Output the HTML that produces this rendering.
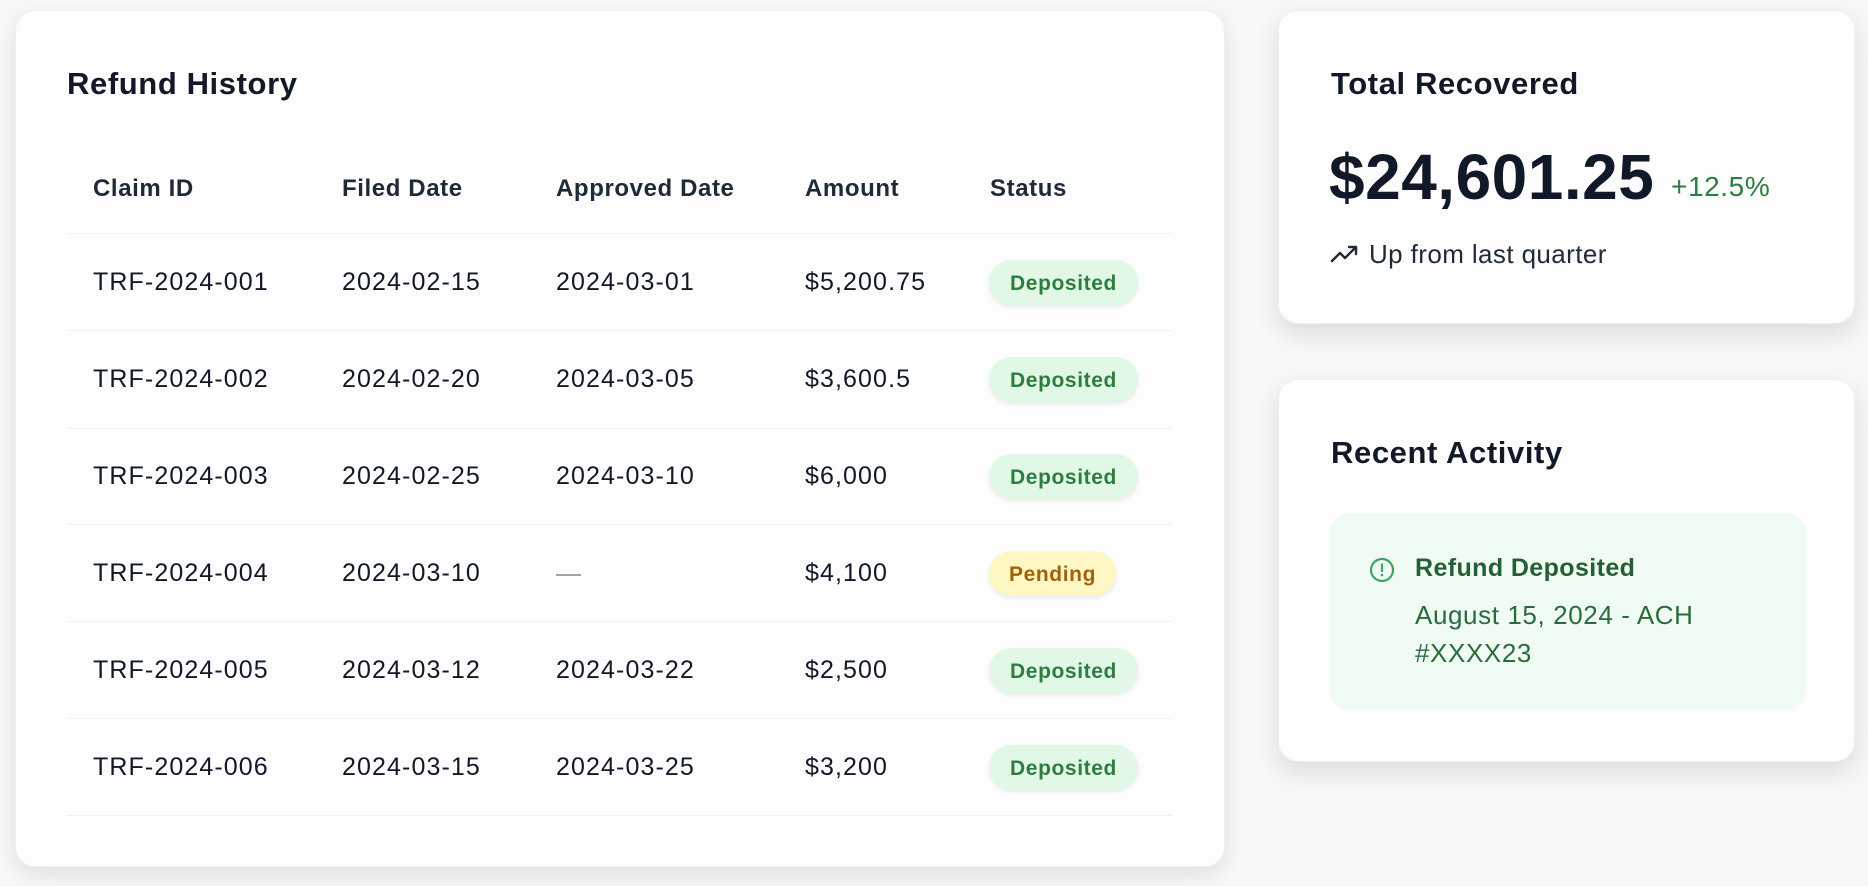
<!DOCTYPE html>
<html><head><meta charset="utf-8"><style>
*{box-sizing:border-box;margin:0;padding:0}
body{width:1868px;height:886px;background:#f8f8f8;font-family:"Liberation Sans",sans-serif;color:#111827;position:relative;overflow:hidden}
.card{position:absolute;background:#fdfdfd;border-radius:20px;box-shadow:0 8px 22px rgba(0,0,0,0.10);border:1px solid #f0f0f0}
.t{position:absolute;white-space:nowrap}
.h2{font-size:31px;font-weight:bold;letter-spacing:0.6px}
.hd{font-size:24px;font-weight:bold;color:#1f2937;letter-spacing:0.6px}
.cell{font-size:25px;letter-spacing:1.1px;color:#111827}
.line{position:absolute;left:67px;width:1105px;height:1px;background:#eef2f7}
.badge{position:absolute;left:989px;height:45px;width:149px;border-radius:23px;background:#e1f8e6;color:#2e7d40;font-weight:bold;font-size:21px;text-align:center;line-height:47px;box-shadow:0 2px 4px rgba(0,0,0,0.08);letter-spacing:0.6px}
.pend{background:#fef7c3;color:#a16207;width:127px}
</style></head><body>
<div class="card" style="left:15px;top:10px;width:1210px;height:857px"></div>
<div class="t h2" style="left:67px;top:66px">Refund History</div>
<div class="t hd" style="left:93px;top:175px">Claim ID</div>
<div class="t hd" style="left:342px;top:175px">Filed Date</div>
<div class="t hd" style="left:556px;top:175px">Approved Date</div>
<div class="t hd" style="left:805px;top:175px">Amount</div>
<div class="t hd" style="left:990px;top:175px">Status</div>
<div class="line" style="top:233px"></div>
<div class="line" style="top:330px"></div>
<div class="line" style="top:428px"></div>
<div class="line" style="top:524px"></div>
<div class="line" style="top:621px"></div>
<div class="line" style="top:718px"></div>
<div class="line" style="top:815px"></div>

<div class="t cell" style="left:93px;top:268px">TRF-2024-001</div><div class="t cell" style="left:342px;top:268px">2024-02-15</div><div class="t cell" style="left:556px;top:268px">2024-03-01</div><div class="t cell" style="left:805px;top:268px">$5,200.75</div><div class="badge" style="top:260px">Deposited</div>
<div class="t cell" style="left:93px;top:365px">TRF-2024-002</div><div class="t cell" style="left:342px;top:365px">2024-02-20</div><div class="t cell" style="left:556px;top:365px">2024-03-05</div><div class="t cell" style="left:805px;top:365px">$3,600.5</div><div class="badge" style="top:357px">Deposited</div>
<div class="t cell" style="left:93px;top:462px">TRF-2024-003</div><div class="t cell" style="left:342px;top:462px">2024-02-25</div><div class="t cell" style="left:556px;top:462px">2024-03-10</div><div class="t cell" style="left:805px;top:462px">$6,000</div><div class="badge" style="top:454px">Deposited</div>
<div class="t cell" style="left:93px;top:559px">TRF-2024-004</div><div class="t cell" style="left:342px;top:559px">2024-03-10</div><div style="position:absolute;left:556px;top:574px;width:25px;height:2px;background:#9ca3af"></div><div class="t cell" style="left:805px;top:559px">$4,100</div><div class="badge pend" style="top:551px">Pending</div>
<div class="t cell" style="left:93px;top:656px">TRF-2024-005</div><div class="t cell" style="left:342px;top:656px">2024-03-12</div><div class="t cell" style="left:556px;top:656px">2024-03-22</div><div class="t cell" style="left:805px;top:656px">$2,500</div><div class="badge" style="top:648px">Deposited</div>
<div class="t cell" style="left:93px;top:753px">TRF-2024-006</div><div class="t cell" style="left:342px;top:753px">2024-03-15</div><div class="t cell" style="left:556px;top:753px">2024-03-25</div><div class="t cell" style="left:805px;top:753px">$3,200</div><div class="badge" style="top:745px">Deposited</div>

<div class="card" style="left:1278px;top:10px;width:577px;height:314px;box-shadow:0 10px 26px rgba(0,0,0,0.12)"></div>
<div class="t h2" style="left:1331px;top:66px">Total Recovered</div>
<div class="t" style="left:1329px;top:140px;font-size:64px;font-weight:bold;letter-spacing:0.5px">$24,601.25</div>
<div class="t" style="left:1671px;top:171px;font-size:28px;color:#2e7d40;letter-spacing:0.6px">+12.5%</div>
<svg style="position:absolute;left:1330px;top:243px" width="30" height="22" viewBox="0 0 30 22"><path d="M2 18 L10 10 L15 15 L26 4 M19 4 H26 V11" fill="none" stroke="#1f2937" stroke-width="2.4" stroke-linecap="round" stroke-linejoin="round"/></svg>
<div class="t" style="left:1369px;top:239px;font-size:26px;color:#1f2937;letter-spacing:0.4px">Up from last quarter</div>

<div class="card" style="left:1278px;top:379px;width:577px;height:383px;box-shadow:0 10px 26px rgba(0,0,0,0.12)"></div>
<div class="t h2" style="left:1331px;top:435px">Recent Activity</div>
<div style="position:absolute;left:1329px;top:513px;width:477px;height:197px;background:#f0fcf3;border-radius:20px"></div>
<svg style="position:absolute;left:1369px;top:557px" width="26" height="26" viewBox="0 0 26 26"><circle cx="13" cy="13" r="11" fill="none" stroke="#3ba55c" stroke-width="2.2"/><path d="M13 7.5V14" stroke="#3ba55c" stroke-width="2.2" stroke-linecap="round"/><circle cx="13" cy="18" r="1.3" fill="#3ba55c"/></svg>
<div class="t" style="left:1415px;top:554px;font-size:25px;font-weight:bold;color:#245e35;letter-spacing:0.4px">Refund Deposited</div>
<div class="t" style="left:1415px;top:596px;font-size:26px;color:#2a6b3b;line-height:38px;letter-spacing:0.6px">August 15, 2024 - ACH<br>#XXXX23</div>
</body></html>
